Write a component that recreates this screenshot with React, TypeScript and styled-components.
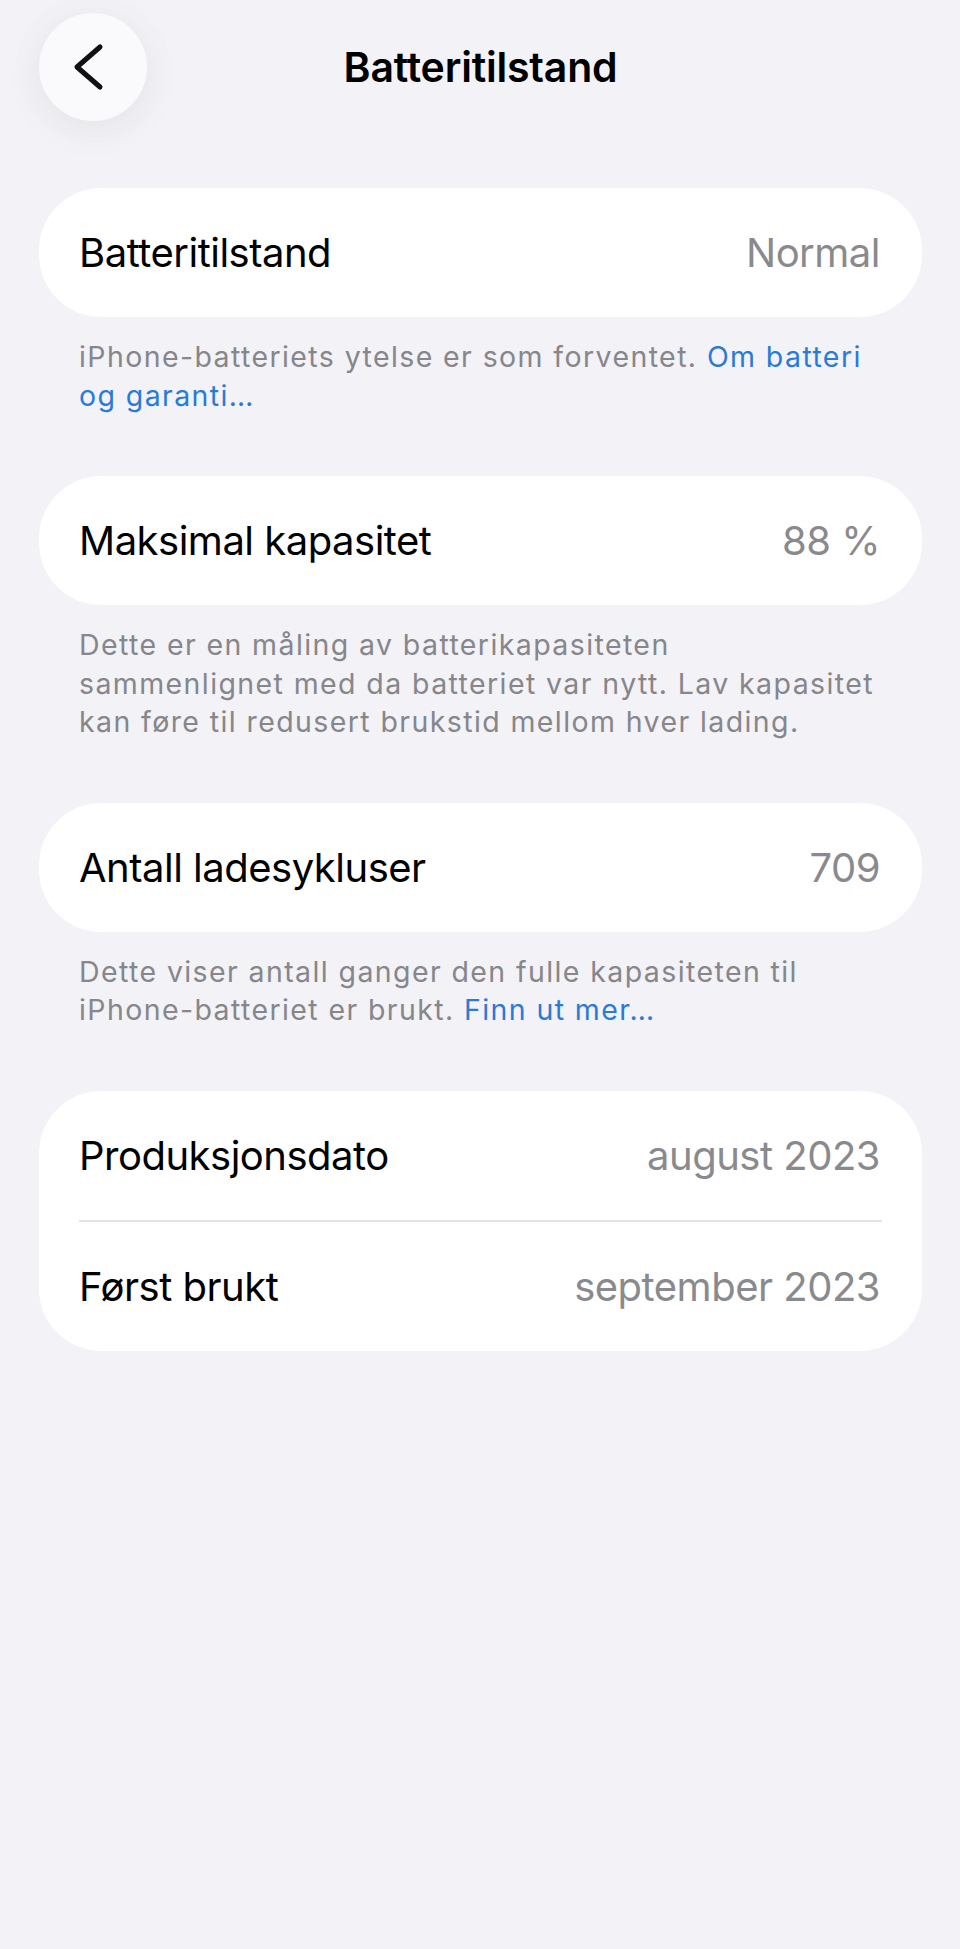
import React from "react";
import styled, { createGlobalStyle } from "styled-components";

const GlobalStyle = createGlobalStyle`
  html, body {
    margin: 0;
    padding: 0;
    background: #f2f2f7;
  }
  body {
    font-family: Inter, "Noto Sans", "Liberation Sans", sans-serif;
    -webkit-font-smoothing: antialiased;
  }
  * { box-sizing: border-box; }
`;

const Page = styled.div`
  min-height: 1949px;
  background: #f2f2f7;
  padding: 13px 38px 0 39px;
`;

const Header = styled.header`
  display: grid;
  grid-template-columns: 108px 1fr 108px;
  align-items: center;
  height: 108px;
  margin-bottom: 67px;
`;

const BackButton = styled.button`
  width: 108px;
  height: 108px;
  border-radius: 50%;
  border: none;
  padding: 0;
  background: #fafafd;
  box-shadow: 0 10px 40px rgba(0, 0, 0, 0.05), 0 0 60px rgba(0, 0, 0, 0.025);
  display: flex;
  align-items: center;
  justify-content: center;
  cursor: pointer;
`;

const Title = styled.h1`
  margin: 0;
  text-align: center;
  font-size: 41px;
  font-weight: 600;
  letter-spacing: -0.2px;
  color: #000;
`;

const Card = styled.section`
  background: #ffffff;
  border-radius: 62px;
  overflow: hidden;
`;

const Row = styled.div`
  display: flex;
  align-items: center;
  justify-content: space-between;
  height: 129px;
  padding: 0 42px 0 40px;
`;

const Separator = styled.div`
  height: 2px;
  background: #e3e3e8;
  margin: 0 40px 0 40px;
`;

const Label = styled.span`
  font-size: 40px;
  font-weight: 400;
  letter-spacing: -0.5px;
  color: #000;
`;

const Value = styled.span`
  font-size: 40px;
  font-weight: 400;
  letter-spacing: -0.5px;
  color: #8a8a8e;
`;

const Footer = styled.p`
  margin: 21px 0 61px 0;
  padding: 0 42px 0 40px;
  font-size: 28.5px;
  line-height: 38.5px;
  letter-spacing: 1.4px;
  color: #86868b;
`;

const Link = styled.a`
  color: #2a7ad8;
  text-decoration: none;
`;

const Chevron = () => (
  <svg width="108" height="108" viewBox="0 0 108 108" fill="none">
    <path
      d="M61 34 L38 54 L61 74"
      stroke="#111"
      strokeWidth="5"
      strokeLinecap="round"
      strokeLinejoin="round"
    />
  </svg>
);

export default function App() {
  return (
    <>
      <GlobalStyle />
      <Page>
        <Header>
          <BackButton aria-label="Tilbake">
            <Chevron />
          </BackButton>
          <Title>Batteritilstand</Title>
          <span />
        </Header>

        <Card>
          <Row>
            <Label>Batteritilstand</Label>
            <Value>Normal</Value>
          </Row>
        </Card>
        <Footer>
          iPhone-batteriets ytelse er som forventet.{" "}
          <Link href="#">Om batteri og garanti…</Link>
        </Footer>

        <Card>
          <Row>
            <Label>Maksimal kapasitet</Label>
            <Value>88 %</Value>
          </Row>
        </Card>
        <Footer>
          Dette er en måling av batterikapasiteten sammenlignet med da batteriet
          var nytt. Lav kapasitet kan føre til redusert brukstid mellom hver
          lading.
        </Footer>

        <Card>
          <Row>
            <Label>Antall ladesykluser</Label>
            <Value>709</Value>
          </Row>
        </Card>
        <Footer>
          Dette viser antall ganger den fulle kapasiteten til iPhone-batteriet er
          brukt. <Link href="#">Finn ut mer…</Link>
        </Footer>

        <Card>
          <Row>
            <Label>Produksjonsdato</Label>
            <Value>august 2023</Value>
          </Row>
          <Separator />
          <Row>
            <Label>Først brukt</Label>
            <Value>september 2023</Value>
          </Row>
        </Card>
      </Page>
    </>
  );
}
